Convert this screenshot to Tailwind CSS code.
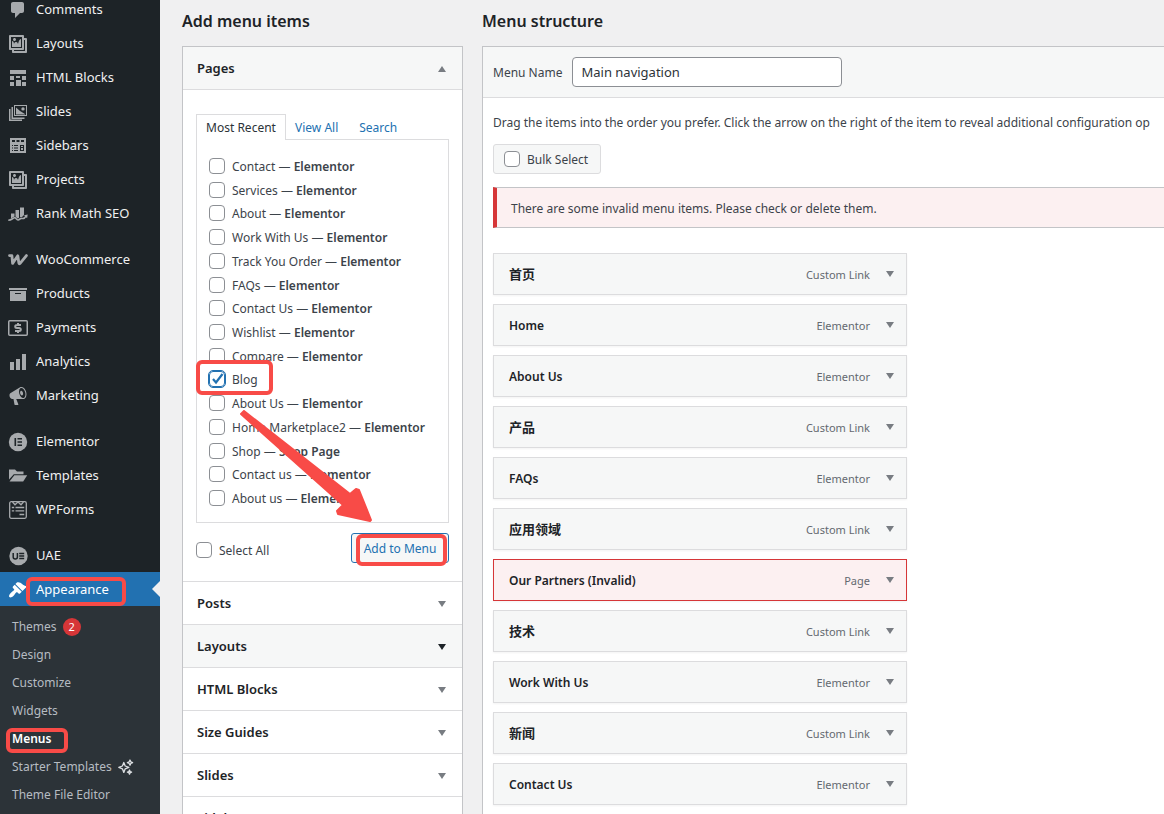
<!DOCTYPE html>
<html lang="en">
<head>
<meta charset="utf-8">
<title>Menus</title>
<script src="https://cdn.jsdelivr.net/npm/@tailwindcss/browser@4"></script>
</head>
<body class="flex h-screen overflow-hidden bg-[#f0f0f1] font-['Noto_Sans','Noto_Sans_CJK_SC',sans-serif] text-xs text-[#3c434a]">

<nav aria-label="Admin" class="w-40 shrink-0 bg-[#1d2327] text-[#f0f0f1]">
  <ul class="-mt-2 text-[13px] [&>li>a]:relative [&>li>a]:flex [&>li>a]:h-[34px] [&>li>a]:items-center [&>li>a]:gap-2 [&>li>a]:pt-0.5 [&>li>a]:pl-2 [&_svg.i]:size-5 [&_svg.i]:shrink-0 [&_svg.i]:text-[#a7aaad]">
    <li><a href="#"><svg class="i" viewBox="0 0 20 20" fill="currentColor"><path d="M5 2h9c1.1 0 2 .9 2 2v7c0 1.1-.9 2-2 2h-2l-5 5v-5H5c-1.1 0-2-.9-2-2V4c0-1.1.9-2 2-2z"/></svg>Comments</a></li>
    <li><a href="#"><svg class="i" viewBox="0 0 20 20" fill="currentColor"><path d="M16 4h1.96c.57 0 1.04.47 1.04 1.04v12.92c0 .57-.47 1.04-1.04 1.04H5.04C4.47 19 4 18.53 4 17.96V16H2.04C1.47 16 1 15.53 1 14.96V2.04C1 1.47 1.47 1 2.04 1h12.92c.57 0 1.04.47 1.04 1.04V4zM3 14h11V3H3v11zm5-8.5C8 4.67 7.33 4 6.5 4S5 4.67 5 5.5 5.67 7 6.5 7 8 6.33 8 5.5zm2 4.5s1-5 3-5v8H4V7c2 0 2 3 2 3s.33-2 2-2 2 2 2 2zm7 7V6h-1v8.96c0 .57-.47 1.04-1.04 1.04H6v1h11z"/></svg>Layouts</a></li>
    <li><a href="#"><svg class="i" viewBox="0 0 20 20" fill="currentColor"><path d="M2 2h16v4H2zM2 8h4v4H2zM8 8h4v2H8zM14 8h4v4h-4zM2 14h4v4H2zM8 12h5v6H8zM14 14h4v4h-4z"/></svg>HTML Blocks</a></li>
    <li><a href="#"><svg class="i" viewBox="0 0 20 20" fill="currentColor"><path fill-rule="evenodd" d="M6 3h13v11H6zM7 4v9h11V4z"/><path d="M3.500 5H5v10.500h11.500V17H3.500zM1 7h1.500v10.500H14V19H1zM8 5.500l4 3.500 5 3v.5H8zM15 5.200a1.700 1.700 0 1 1 0 3.400 1.700 1.700 0 0 1 0-3.400z"/></svg>Slides</a></li>
    <li><a href="#"><svg class="i" viewBox="0 0 20 20" fill="currentColor"><path fill-rule="evenodd" d="M2 2h16v15H2zM4 4v2h3V4zM8.500 4v2h3V4zM13 4v2h3V4zM4 9v1h1V9zM6 9v1h4V9zM12 9v6h4V9zM4 11.500v1h1v-1zM6 11.500v1h4v-1zM4 14v1h1v-1zM6 14v1h4v-1z"/><path d="M13 10h2v1h-2zM13 12h2v2h-2z"/></svg>Sidebars</a></li>
    <li><a href="#"><svg class="i" viewBox="0 0 20 20" fill="currentColor"><path d="M16 4h1.960c.57 0 1.040.47 1.040 1.040v12.920c0 .57-.47 1.040-1.040 1.040H5.040C4.470 19 4 18.530 4 17.960V16H2.040C1.470 16 1 15.530 1 14.960V2.040C1 1.470 1.470 1 2.040 1h12.920c.57 0 1.040.47 1.040 1.040V4zM3 14h11V3H3v11zm5-8.500C8 4.670 7.330 4 6.500 4S5 4.670 5 5.500 5.670 7 6.500 7 8 6.330 8 5.500zm2 4.500s1-5 3-5v8H4V7c2 0 2 3 2 3s.33-2 2-2 2 2 2 2zm7 7V6h-1v8.960c0 .57-.47 1.040-1.040 1.040H6v1h11z"/></svg>Projects</a></li>
    <li><a href="#"><svg class="i" viewBox="0 0 20 20" fill="currentColor"><path d="M3 9.500h3.500v3L3 14.500zM7.500 6H11v8l-1.500.5-2-2zM12 3.500h4V11l-2 2h-2z"/><path fill="none" stroke="currentColor" stroke-width="1.600" d="M.3 16.200c3.500 0 4.500-2.400 6.400-2.400 1.600 0 1.600 2.200 3.300 2.200s1.800-1.600 3.200-1.600 2 .6 3.300-.4l2-2.400"/><path d="M16 11.300l3.700-.9-.6 3.800z"/></svg>Rank Math SEO</a></li>
    <li class="mt-3"><a href="#"><svg class="i" viewBox="0 0 20 20" fill="none" stroke="currentColor" stroke-width="2.800" stroke-linejoin="round" stroke-linecap="round"><path d="M1.500 5.600h2.400l.7 7.800L9.800 5.800l1.100 7.400c.2.700.9.700 1.400 0L18.400 5.600"/></svg>WooCommerce</a></li>
    <li><a href="#"><svg class="i" viewBox="0 0 20 20" fill="currentColor"><path d="M19 4v2H1V4h18zM2 7h16v10H2V7zm11 3V9H7v1h6z"/></svg>Products</a></li>
    <li><a href="#"><svg class="i" viewBox="0 0 20 20" fill="none" stroke="currentColor" stroke-width="1.500"><rect x=".75" y="2.750" width="18.500" height="14.500" rx="1"/><path stroke-width="2" d="M13 7H9c-1.300 0-1.800.6-1.800 1.500S7.800 10 9 10h2c1.200 0 1.800.6 1.800 1.500S12.300 13 11 13H7M10 5v2M10 13v2"/></svg>Payments</a></li>
    <li><a href="#"><svg class="i" viewBox="0 0 20 20" fill="currentColor"><path d="M18 18V2h-4v16h4zm-6 0V7H8v11h4zm-6 0v-8H2v8h4z"/></svg>Analytics</a></li>
    <li><a href="#"><svg class="i" viewBox="0 0 20 20" fill="currentColor"><path d="M18.150 5.940c.46 1.620.38 3.220-.02 4.480-.42 1.280-1.260 2.180-2.300 2.480-.16.060-.26.060-.4.060-.06.020-.12.020-.18.020-.06.020-.14.020-.22.020h-6.800l2.220 5.500c.02.140-.06.260-.14.340-.08.100-.24.160-.34.160H6.950c-.1 0-.26-.06-.34-.16-.08-.08-.16-.2-.14-.34l-1-5.500H4.250l-.02-.02c-.5.060-1.080-.18-1.540-.62s-.88-1.080-1.060-1.880c-.24-.8-.2-1.560-.02-2.200.18-.62.58-1.080 1.060-1.300l.02-.02 9-5.400c.1-.06.18-.1.240-.16.060-.04.140-.08.240-.12.160-.08.280-.12.500-.18 1.040-.3 2.240.1 3.220.98s1.840 2.240 2.260 3.860zm-2.580 5.980h-.02c.4-.1.740-.34 1.040-.7.580-.7.860-1.760.860-3.040 0-.64-.1-1.300-.28-1.980-.34-1.360-1.020-2.500-1.780-3.240s-1.680-1.100-2.460-.88c-.82.220-1.400.960-1.700 2-.32 1.040-.28 2.360.06 3.720.38 1.360 1 2.500 1.800 3.240.78.740 1.620 1.100 2.480.88zm-2.540-7.080c.22-.04.42-.02.62.040.38.160.76.480 1.020 1s.42 1.200.42 1.780c0 .3-.04.56-.12.8-.18.480-.44.840-.86.940-.34.100-.8-.06-1.140-.4s-.64-.86-.78-1.500c-.18-.62-.12-1.240.02-1.720s.48-.84.820-.94z"/></svg>Marketing</a></li>
    <li class="mt-3"><a href="#"><svg class="i" viewBox="0 0 20 20"><circle cx="10" cy="10" r="9.200" fill="currentColor"/><path fill="#1d2327" d="M6.500 6h1.600v8H6.500zM9.500 6h4.500v1.500H9.500zM9.500 9.250h4.500v1.500H9.500zM9.500 12.500h4.500V14H9.500z"/></svg>Elementor</a></li>
    <li><a href="#"><svg class="i" viewBox="0 0 20 20" fill="currentColor"><path d="M1 3.500h6l2 2h6.500v2.700H5.800L1 13.500z"/><path d="M6.300 9.300h12.900l-4 6.200H1.500z"/></svg>Templates</a></li>
    <li><a href="#"><svg class="i" viewBox="0 0 20 20" fill="none" stroke="currentColor" stroke-width="1.300"><rect x="1.700" y="1.700" width="16.600" height="16.600" rx="1.500"/><path d="M4.500 2l2.500 2.800L10 2l3 2.800L15.500 2M3.800 7.500h2.400M7.500 7.500h8.700M3.800 10.800h2.400M7.500 10.800h8.700M11.500 14.500h4.700"/></svg>WPForms</a></li>
    <li class="mt-3"><a href="#"><svg class="i" viewBox="0 0 20 20"><circle cx="10.500" cy="10" r="9.200" fill="currentColor"/><path fill="none" stroke="#1d2327" stroke-width="1.500" d="M5.200 7v4c0 2.600 4.200 2.600 4.200 0V7M11.200 7.500h5M11.200 10h5M11.200 12.500h5"/></svg>UAE</a></li>
    <li><a href="#" class="bg-[#2271b1] text-white"><svg class="size-5 shrink-0" viewBox="0 0 20 20" fill="currentColor"><path d="M14.480 11.060L7.410 3.990l1.500-1.500c.5-.56 2.300-.47 3.510.32 1.210.8 1.430 1.280 2.910 2.100 1.180.640 2.450 1.260 4.450.850zm-.71.710L6.700 4.700 4.930 6.470c-.39.390-.39 1.020 0 1.410l1.060 1.060c.39.390.39 1.030 0 1.420-.6.600-1.430 1.110-2.210 1.690-.35.260-.7.530-1.010.84C1.430 14.230.4 16.080 1.400 17.070c.99 1 2.840-.03 4.180-1.360.31-.31.580-.66.850-1.020.57-.78 1.080-1.610 1.690-2.210.39-.39 1.020-.39 1.410 0l1.060 1.060c.39.390 1.020.39 1.410 0z"/></svg>Appearance
      <svg class="absolute top-[9px] right-0 h-4 w-2 text-[#f0f0f1]" viewBox="0 0 8 16" fill="currentColor"><path d="M8 0v16L0 8z"/></svg>
      <span class="absolute top-[5px] left-[26px] h-[29px] w-[100px] rounded-md border-4 border-[#f84b47]"></span></a></li>
  </ul>
  <ul class="h-full bg-[#2c3338] pt-1.5 text-xs text-[#b6bcc2] [&>li>a]:relative [&>li>a]:flex [&>li>a]:h-7 [&>li>a]:items-center [&>li>a]:gap-1.5 [&>li>a]:pt-0.5 [&>li>a]:pl-3">
    <li><a href="#">Themes <span class="grid size-[18px] place-items-center rounded-full bg-[#d63638] text-[11px] text-white">2</span></a></li>
    <li><a href="#">Design</a></li>
    <li><a href="#">Customize</a></li>
    <li><a href="#">Widgets</a></li>
    <li><a href="#" class="font-semibold text-white">Menus<span class="absolute top-1 left-1.5 h-[25px] w-[62px] rounded-md border-4 border-[#f84b47]"></span></a></li>
    <li><a href="#">Starter Templates <svg class="size-4 text-[#dcdfe2]" viewBox="0 0 16 16" fill="none" stroke="currentColor" stroke-width="1.300" stroke-linejoin="round"><path d="M5.800 3.500L7.200 7l3.600 1.400-3.600 1.400-1.400 3.600-1.400-3.600L.8 8.400 4.400 7z"/><path d="M12 1l.8 1.800 1.800.8-1.800.8L12 6.200l-.8-1.800-1.800-.8 1.800-.8zM11.500 11l.6 1.500 1.500.6-1.500.6-.6 1.500-.6-1.500-1.500-.6 1.500-.6z"/></svg></a></li>
    <li><a href="#">Theme File Editor</a></li>
  </ul>
</nav>

<main class="flex min-w-0 flex-1 gap-[19px] pl-[22px]">
  <section class="w-[281px] shrink-0">
    <h2 class="flex h-[46px] items-center pb-1 text-base font-semibold text-[#1d2327]">Add menu items</h2>
    <div class="border border-[#c3c4c7] bg-white [&_h3>button]:flex [&_h3>button]:h-[42px] [&_h3>button]:w-full [&_h3>button]:items-center [&_h3>button]:justify-between [&_h3>button]:px-3.5 [&_h3>button]:pt-0.5 [&_h3]:border-b [&_h3]:border-[#dcdcde] [&_h3]:text-[13px] [&_h3]:font-semibold [&_h3]:text-[#1d2327] [&_h3_svg]:mr-0.5 [&_h3_svg]:h-1.5 [&_h3_svg]:w-2 [&_h3_svg]:text-[#787c82]">
      <h3 class="bg-[#f6f7f7]"><button type="button" aria-expanded="true">Pages <svg viewBox="0 0 8 6" fill="currentColor"><path d="M0 6h8L4 0z"/></svg></button></h3>
      <div class="relative border-b border-[#dcdcde] px-[13px] pt-6 pb-[18px]">
        <div class="flex text-[#2271b1]" role="tablist">
          <button type="button" role="tab" aria-selected="true" class="z-10 -mb-px h-[26px] w-[90px] border border-b-0 border-[#dcdcde] bg-white text-[#2c3338]">Most Recent</button>
          <button type="button" role="tab" class="pt-0.5 pr-3 pl-[9px]">View All</button>
          <button type="button" role="tab" class="px-[9px] pt-0.5">Search</button>
        </div>
        <div class="border border-[#dcdcde] px-3 pt-3.5 pb-3">
          <ul class="grid h-[356px] auto-rows-fr whitespace-nowrap [&_b]:font-semibold [&_input]:mr-[7px] [&_input]:-mt-0.5 [&_input]:size-4 [&_input]:appearance-none [&_input]:rounded [&_input]:border [&_input]:border-[#8c8f94] [&_input]:bg-white [&_label]:flex [&_label]:items-center [&_label]:pt-0.5 [&_label]:whitespace-pre [&_li]:flex [&_li]:items-center">
            <li><label><input type="checkbox">Contact — <b>Elementor</b></label></li>
            <li><label><input type="checkbox">Services — <b>Elementor</b></label></li>
            <li><label><input type="checkbox">About — <b>Elementor</b></label></li>
            <li><label><input type="checkbox">Work With Us — <b>Elementor</b></label></li>
            <li><label><input type="checkbox">Track You Order — <b>Elementor</b></label></li>
            <li><label><input type="checkbox">FAQs — <b>Elementor</b></label></li>
            <li><label><input type="checkbox">Contact Us — <b>Elementor</b></label></li>
            <li><label><input type="checkbox">Wishlist — <b>Elementor</b></label></li>
            <li><label><input type="checkbox">Compare — <b>Elementor</b></label></li>
            <li><label class="relative"><input type="checkbox" checked class="outline outline-[#2271b1] checked:border-[#2271b1]">Blog<svg class="absolute top-[3px] left-[3px] size-3 text-[#2271b1]" viewBox="0 0 12 12" fill="none" stroke="currentColor" stroke-width="2.200"><path d="M1 6l3 3.500L10.500 1"/></svg><span class="absolute -bottom-[7px] -left-[13px] h-[35px] w-[77px] rounded-md border-4 border-[#f84b47]"></span></label></li>
            <li><label><input type="checkbox">About Us — <b>Elementor</b></label></li>
            <li><label><input type="checkbox">Home Marketplace2 — <b>Elementor</b></label></li>
            <li><label><input type="checkbox">Shop — <b>Shop Page</b></label></li>
            <li><label><input type="checkbox">Contact us — <b>Elementor</b></label></li>
            <li><label><input type="checkbox">About us — <b>Elementor</b></label></li>
          </ul>
        </div>
        <div class="mt-2.5 flex items-center justify-between">
          <label class="flex items-center gap-[7px] pt-1"><input type="checkbox" class="size-4 appearance-none rounded border border-[#8c8f94] bg-white"><span class="pt-0.5">Select All</span></label>
          <button type="button" class="relative h-[30px] w-[98px] rounded-[3px] border border-[#2271b1] bg-[#f6f7f7] pt-0.5 text-[#2271b1]">Add to Menu<span class="absolute top-0 left-1 h-8 w-[91px] rounded-md border-4 border-[#f84b47]"></span></button>
        </div>
        <svg class="pointer-events-none absolute top-80 left-14 z-20 h-[112px] w-[134px] text-[#f84b47]" viewBox="0 0 134 112" fill="currentColor" stroke="currentColor" stroke-width="2" stroke-linejoin="round"><path d="M2 4l3-3L111 84l6-5 3 1 12 30-1 1-32-7-1-3 6-6z"/></svg>
      </div>
      <h3><button type="button">Posts <svg viewBox="0 0 8 6" fill="currentColor"><path d="M0 0h8L4 6z"/></svg></button></h3>
      <h3 class="bg-[#f6f7f7]"><button type="button">Layouts <svg viewBox="0 0 8 6"><path fill="#1d2327" d="M0 0h8L4 6z"/></svg></button></h3>
      <h3><button type="button">HTML Blocks <svg viewBox="0 0 8 6" fill="currentColor"><path d="M0 0h8L4 6z"/></svg></button></h3>
      <h3><button type="button">Size Guides <svg viewBox="0 0 8 6" fill="currentColor"><path d="M0 0h8L4 6z"/></svg></button></h3>
      <h3><button type="button">Slides <svg viewBox="0 0 8 6" fill="currentColor"><path d="M0 0h8L4 6z"/></svg></button></h3>
      <h3><button type="button">Sidebars <svg viewBox="0 0 8 6" fill="currentColor"><path d="M0 0h8L4 6z"/></svg></button></h3>
    </div>
  </section>

  <section class="flex min-w-0 flex-1 flex-col">
    <h2 class="flex h-[46px] shrink-0 items-center pb-1 text-base font-semibold text-[#1d2327]">Menu structure</h2>
    <div class="flex-1 border-t border-l border-[#c3c4c7] bg-white">
      <div class="flex items-center gap-2.5 border-b border-[#dcdcde] bg-[#f6f7f7] px-2.5 py-2.5">
        <label for="menu-name" class="pt-px">Menu Name</label>
        <input id="menu-name" type="text" value="Main navigation" class="h-[30px] w-[270px] rounded border border-[#8c8f94] bg-white px-2 text-[13px] text-[#2c3338]">
      </div>
      <div class="pt-4 pl-2.5">
        <p class="overflow-hidden leading-[18px] whitespace-nowrap">Drag the items into the order you prefer. Click the arrow on the right of the item to reveal additional configuration op</p>
        <label class="mt-3 flex h-[30px] w-[108px] items-center gap-[7px] rounded-[3px] border border-[#dcdcde] bg-[#f6f7f7] pl-2.5"><input type="checkbox" class="size-4 appearance-none rounded border border-[#8c8f94] bg-white"><span class="pt-px">Bulk Select</span></label>
        <div class="mt-[13px] flex h-[41px] items-center border-y border-l-4 border-y-[#c3c4c7] border-l-[#d63638] bg-[#fcf0f1] pt-0.5 pl-3.5">There are some invalid menu items. Please check or delete them.</div>
        <ul class="mt-[25px] flex w-[414px] flex-col gap-[9px] [&>li]:flex [&>li]:h-[42px] [&>li]:items-center [&>li]:border [&>li]:border-[#dcdcde] [&>li]:bg-[#f6f7f7] [&>li]:pr-3 [&>li]:pl-[15px] [&>li]:shadow-xs [&_b]:flex-1 [&_b]:pt-0.5 [&_b]:font-semibold [&_b]:text-[#1d2327] [&_b:lang(zh)]:text-[13px] [&_button]:ml-4 [&_span]:pt-0.5 [&_span]:text-[11px] [&_span]:text-[#646970] [&_svg]:h-1.5 [&_svg]:w-2 [&_svg]:text-[#787c82]">
          <li><b lang="zh">首页</b><span>Custom Link</span><button type="button" aria-label="Edit"><svg viewBox="0 0 8 6" fill="currentColor"><path d="M0 0h8L4 6z"/></svg></button></li>
          <li><b>Home</b><span>Elementor</span><button type="button" aria-label="Edit"><svg viewBox="0 0 8 6" fill="currentColor"><path d="M0 0h8L4 6z"/></svg></button></li>
          <li><b>About Us</b><span>Elementor</span><button type="button" aria-label="Edit"><svg viewBox="0 0 8 6" fill="currentColor"><path d="M0 0h8L4 6z"/></svg></button></li>
          <li><b lang="zh">产品</b><span>Custom Link</span><button type="button" aria-label="Edit"><svg viewBox="0 0 8 6" fill="currentColor"><path d="M0 0h8L4 6z"/></svg></button></li>
          <li><b>FAQs</b><span>Elementor</span><button type="button" aria-label="Edit"><svg viewBox="0 0 8 6" fill="currentColor"><path d="M0 0h8L4 6z"/></svg></button></li>
          <li><b lang="zh">应用领域</b><span>Custom Link</span><button type="button" aria-label="Edit"><svg viewBox="0 0 8 6" fill="currentColor"><path d="M0 0h8L4 6z"/></svg></button></li>
          <li class="border-[#d63638]! bg-[#fcf0f1]!"><b>Our Partners (Invalid)</b><span>Page</span><button type="button" aria-label="Edit"><svg viewBox="0 0 8 6" fill="currentColor"><path d="M0 0h8L4 6z"/></svg></button></li>
          <li><b lang="zh">技术</b><span>Custom Link</span><button type="button" aria-label="Edit"><svg viewBox="0 0 8 6" fill="currentColor"><path d="M0 0h8L4 6z"/></svg></button></li>
          <li><b>Work With Us</b><span>Elementor</span><button type="button" aria-label="Edit"><svg viewBox="0 0 8 6" fill="currentColor"><path d="M0 0h8L4 6z"/></svg></button></li>
          <li><b lang="zh">新闻</b><span>Custom Link</span><button type="button" aria-label="Edit"><svg viewBox="0 0 8 6" fill="currentColor"><path d="M0 0h8L4 6z"/></svg></button></li>
          <li><b>Contact Us</b><span>Elementor</span><button type="button" aria-label="Edit"><svg viewBox="0 0 8 6" fill="currentColor"><path d="M0 0h8L4 6z"/></svg></button></li>
        </ul>
      </div>
    </div>
  </section>
</main>
</body>
</html>
